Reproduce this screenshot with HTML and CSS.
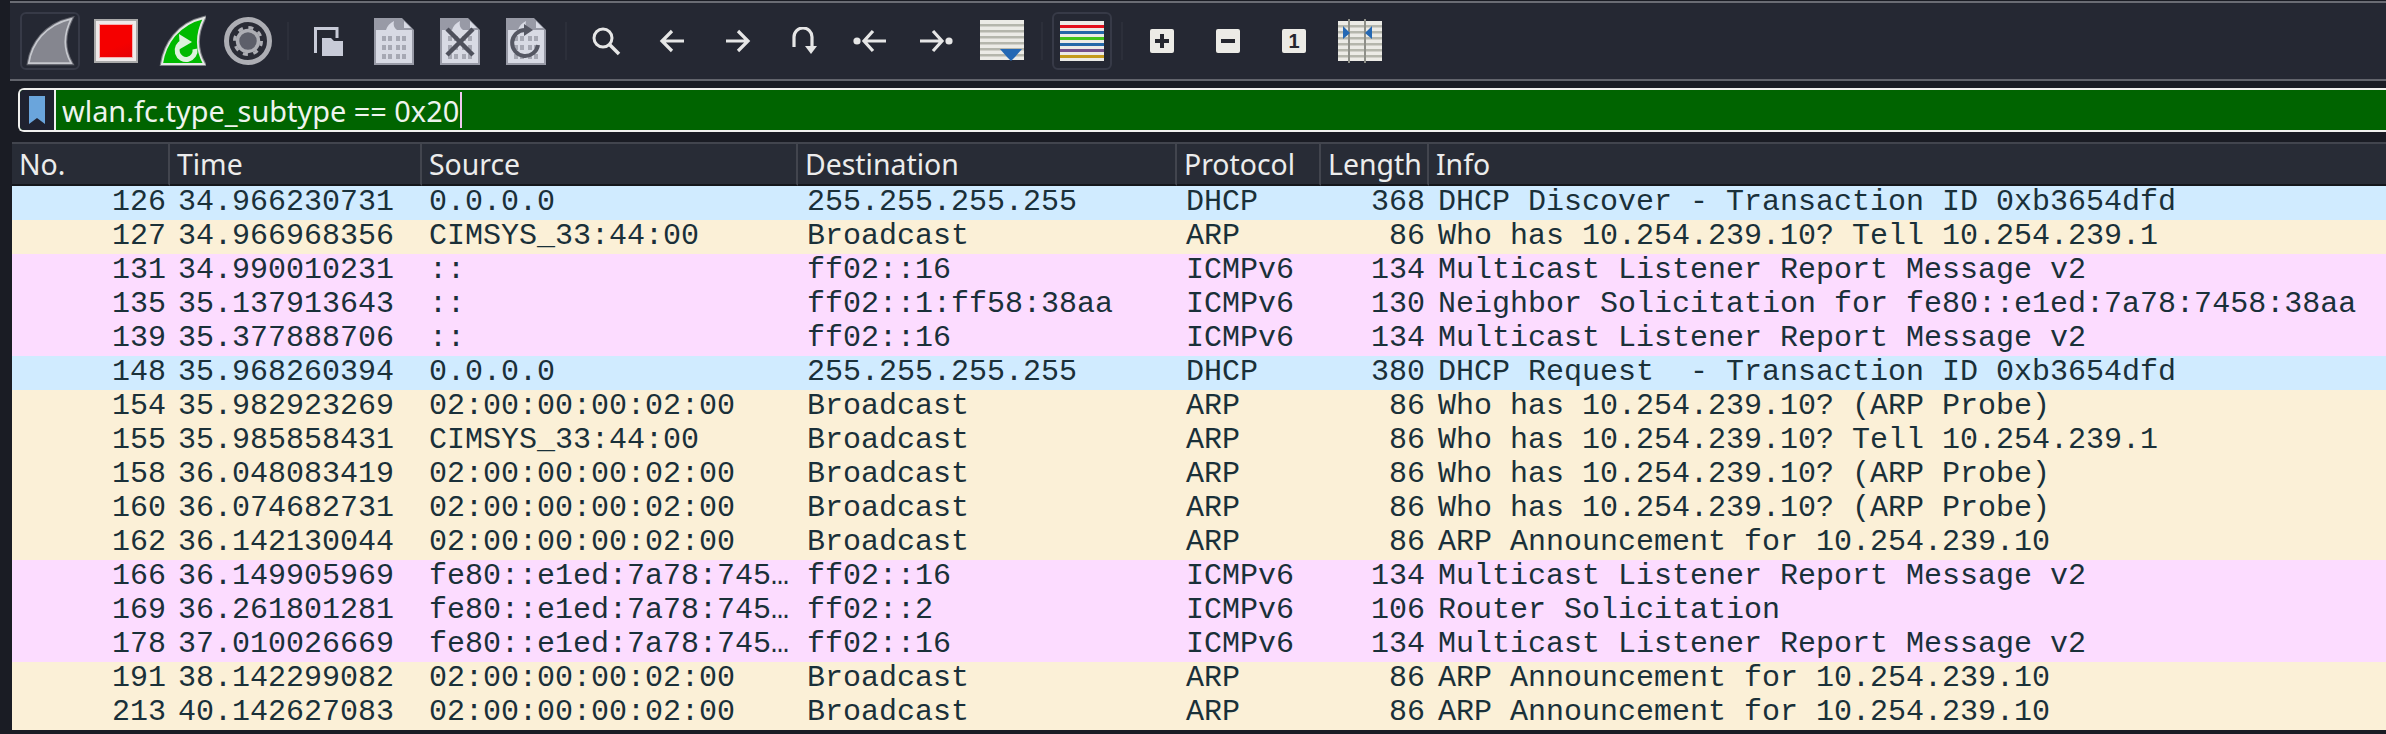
FILE: index.html
```html
<!DOCTYPE html>
<html lang="en">
<head>
<meta charset="utf-8">
<title>Wireshark</title>
<link rel="stylesheet" href="styles.css">
</head>
<body>
<svg class="defs" width="0" height="0" aria-hidden="true">
  <defs>
    <g id="digits" fill="#a6a8b3">
      <rect x="8" y="18" width="4" height="5"/><rect x="14" y="18" width="4" height="5"/><rect x="22" y="18" width="4" height="5"/><rect x="28" y="18" width="4" height="5"/>
      <rect x="8" y="27" width="4" height="5"/><rect x="14" y="27" width="4" height="5"/><rect x="22" y="27" width="4" height="5"/><rect x="28" y="27" width="4" height="5"/>
      <rect x="8" y="36" width="4" height="5"/><rect x="14" y="36" width="4" height="5"/><rect x="22" y="36" width="4" height="5"/><rect x="28" y="36" width="4" height="5"/>
    </g>
    <g id="doc">
      <path d="M0 0H28L40 12V47H0Z" fill="#989aa6"/>
      <path d="M2 12H38V45H2Z" fill="#d8dae4"/>
      <path d="M12 12C13 8 16 5 20 3C19 7 20 10 23 12Z" fill="#d8dae4"/>
      <path d="M30 3L37 10H30Z" fill="#d8dae4"/>
    </g>
    <g id="sheet">
      <rect width="44" height="40" fill="#ecebe6"/>
      <g fill="#b5b6ac">
        <rect y="4" width="44" height="2.5"/><rect y="10" width="44" height="2.5"/><rect y="16" width="44" height="2.5"/><rect y="22" width="44" height="2.5"/><rect y="28" width="44" height="2.5"/><rect y="34" width="44" height="2.5"/>
      </g>
    </g>
  </defs>
</svg>
<main class="app">
  <div class="toolbar">
    <button class="tool pressed"><svg width="58" height="58" viewBox="0 0 58 58"><path d="M7 52C10 32 24 12 51 6C43 22 43 38 51 52Z" fill="#85868f" stroke="#666770" stroke-width="4"/><path d="M7 52C10 32 24 12 51 6C43 22 43 38 51 52Z" fill="#85868f" stroke="#c6c8ce" stroke-width="1.8"/></svg></button>
    <button class="tool"><span class="stop"></span></button>
    <button class="tool"><svg width="48" height="52" viewBox="0 0 48 52"><path d="M4 49C7 29 20 9 46 3C38 19 38 35 46 49Z" fill="#00b900" stroke="#7c7e84" stroke-width="4"/><path d="M4 49C7 29 20 9 46 3C38 19 38 35 46 49Z" fill="#00b900" stroke="#e6e8e6" stroke-width="1.8"/><path d="M37 34A9 9 0 1 1 25 27" fill="none" stroke="#dcf2dc" stroke-width="5"/><path d="M21 19L34 27L22 34Z" fill="#dcf2dc"/></svg></button>
    <button class="tool"><svg width="50" height="50" viewBox="0 0 50 50"><circle cx="25" cy="25" r="21.5" fill="#2a2c36" stroke="#adaeb4" stroke-width="5"/><circle cx="25" cy="25" r="10.5" fill="#5d5f6a" stroke="#adaeb4" stroke-width="3.5"/><circle cx="25" cy="25" r="13.5" fill="none" stroke="#adaeb4" stroke-width="3" stroke-dasharray="5 5.6"/></svg></button>
    <span class="sep"></span>
    <button class="tool"><svg width="30" height="30" viewBox="0 0 30 30"><path d="M2.5 27V2.5H24V12" fill="none" stroke="#c8cbd8" stroke-width="3"/><path d="M9 30V12H18L21 15H30V30Z" fill="#c8cbd8"/></svg></button>
    <button class="tool"><svg width="40" height="47" viewBox="0 0 40 47"><use href="#doc"/><use href="#digits"/></svg></button>
    <button class="tool"><svg width="40" height="47" viewBox="0 0 40 47"><use href="#doc"/><use href="#digits"/><path d="M7 11L33 37M33 11L7 37" stroke="#4e505c" stroke-width="4.5"/></svg></button>
    <button class="tool"><svg width="40" height="47" viewBox="0 0 40 47"><use href="#doc"/><use href="#digits"/><path d="M32 27A13 13 0 1 1 19 12" fill="none" stroke="#555763" stroke-width="4"/><path d="M18 6L27 12L18 18Z" fill="#555763"/></svg></button>
    <span class="sep"></span>
    <button class="tool"><svg width="30" height="30" viewBox="0 0 30 30"><circle cx="12" cy="12" r="9" fill="none" stroke="#e6e6e6" stroke-width="3"/><path d="M18 18L28 28" stroke="#e6e6e6" stroke-width="3.5"/></svg></button>
    <button class="tool"><svg width="26" height="24" viewBox="0 0 26 24"><path d="M13 2L3 12L13 22M3 12H25" fill="none" stroke="#e6e6e6" stroke-width="3.2"/></svg></button>
    <button class="tool"><svg width="26" height="24" viewBox="0 0 26 24"><path d="M13 2L23 12L13 22M23 12H1" fill="none" stroke="#e6e6e6" stroke-width="3.2"/></svg></button>
    <button class="tool"><svg width="26" height="28" viewBox="0 0 26 28"><path d="M3 20V10A9 9 0 0 1 21 10V23" fill="none" stroke="#e6e6e6" stroke-width="3.2"/><path d="M14 19H26L20 27Z" fill="#e6e6e6"/></svg></button>
    <button class="tool"><svg width="34" height="24" viewBox="0 0 34 24"><circle cx="4" cy="12" r="3.6" fill="#e6e6e6"/><path d="M20 2L11 12L20 22M11 12H33" fill="none" stroke="#e6e6e6" stroke-width="3.2"/></svg></button>
    <button class="tool"><svg width="34" height="24" viewBox="0 0 34 24"><circle cx="30" cy="12" r="3.6" fill="#e6e6e6"/><path d="M14 2L23 12L14 22M23 12H1" fill="none" stroke="#e6e6e6" stroke-width="3.2"/></svg></button>
    <button class="tool"><svg width="44" height="42" viewBox="0 0 44 42"><use href="#sheet"/><path d="M20 29H42L35 37L31 41L27 37Z" fill="#2468b4"/></svg></button>
    <span class="sep"></span>
    <button class="tool pressed"><svg width="44" height="40" viewBox="0 0 44 40"><rect width="44" height="40" fill="#ecebe6"/><rect y="4" width="44" height="3" fill="#e3101c"/><rect y="10" width="44" height="3" fill="#2468a8"/><rect y="16" width="44" height="3" fill="#3fc41a"/><rect y="22" width="44" height="3" fill="#2468a8"/><rect y="28" width="44" height="3" fill="#75508a"/><rect y="34" width="44" height="3" fill="#c49a1c"/></svg></button>
    <span class="sep"></span>
    <button class="tool"><svg width="24" height="24" viewBox="0 0 24 24"><rect width="24" height="24" rx="2" fill="#ecebe6"/><path d="M12 5V19M5 12H19" stroke="#25272f" stroke-width="4"/></svg></button>
    <button class="tool"><svg width="24" height="24" viewBox="0 0 24 24"><rect width="24" height="24" rx="2" fill="#ecebe6"/><path d="M5 12H19" stroke="#25272f" stroke-width="4"/></svg></button>
    <button class="tool"><span class="one">1</span></button>
    <button class="tool"><svg width="44" height="44" viewBox="0 0 44 44"><use href="#sheet" y="2"/><path d="M11 0V44M27 0V44" stroke="#8e8f88" stroke-width="2"/><path d="M5 7L12 14L5 20ZM34 7L27 14L34 20Z" fill="#2468b4"/></svg></button>
  </div>
  <div class="filter">
    <span class="bookmark"><svg width="16" height="28" viewBox="0 0 16 28"><path d="M0 0H16V28L8 22L0 28Z" fill="#6aa5dc"/></svg></span>
    <span class="filter-input"><span class="filter-text">wlan.fc.type_subtype == 0x20</span><span class="caret"></span></span>
  </div>
  <table class="packets">
    <colgroup><col class="c-no"><col class="c-time"><col class="c-src"><col class="c-dst"><col class="c-proto"><col class="c-len"><col></colgroup>
    <thead><tr><th>No.</th><th>Time</th><th>Source</th><th>Destination</th><th>Protocol</th><th>Length</th><th>Info</th></tr></thead>
    <tbody>
      <tr class="dhcp"><td class="num">126</td><td>34.966230731</td><td>0.0.0.0</td><td>255.255.255.255</td><td>DHCP</td><td class="num">368</td><td>DHCP Discover - Transaction ID 0xb3654dfd</td></tr>
      <tr class="arp"><td class="num">127</td><td>34.966968356</td><td>CIMSYS_33:44:00</td><td>Broadcast</td><td>ARP</td><td class="num">86</td><td>Who has 10.254.239.10? Tell 10.254.239.1</td></tr>
      <tr class="icmp"><td class="num">131</td><td>34.990010231</td><td>::</td><td>ff02::16</td><td>ICMPv6</td><td class="num">134</td><td>Multicast Listener Report Message v2</td></tr>
      <tr class="icmp"><td class="num">135</td><td>35.137913643</td><td>::</td><td>ff02::1:ff58:38aa</td><td>ICMPv6</td><td class="num">130</td><td>Neighbor Solicitation for fe80::e1ed:7a78:7458:38aa</td></tr>
      <tr class="icmp"><td class="num">139</td><td>35.377888706</td><td>::</td><td>ff02::16</td><td>ICMPv6</td><td class="num">134</td><td>Multicast Listener Report Message v2</td></tr>
      <tr class="dhcp"><td class="num">148</td><td>35.968260394</td><td>0.0.0.0</td><td>255.255.255.255</td><td>DHCP</td><td class="num">380</td><td>DHCP Request  - Transaction ID 0xb3654dfd</td></tr>
      <tr class="arp"><td class="num">154</td><td>35.982923269</td><td>02:00:00:00:02:00</td><td>Broadcast</td><td>ARP</td><td class="num">86</td><td>Who has 10.254.239.10? (ARP Probe)</td></tr>
      <tr class="arp"><td class="num">155</td><td>35.985858431</td><td>CIMSYS_33:44:00</td><td>Broadcast</td><td>ARP</td><td class="num">86</td><td>Who has 10.254.239.10? Tell 10.254.239.1</td></tr>
      <tr class="arp"><td class="num">158</td><td>36.048083419</td><td>02:00:00:00:02:00</td><td>Broadcast</td><td>ARP</td><td class="num">86</td><td>Who has 10.254.239.10? (ARP Probe)</td></tr>
      <tr class="arp"><td class="num">160</td><td>36.074682731</td><td>02:00:00:00:02:00</td><td>Broadcast</td><td>ARP</td><td class="num">86</td><td>Who has 10.254.239.10? (ARP Probe)</td></tr>
      <tr class="arp"><td class="num">162</td><td>36.142130044</td><td>02:00:00:00:02:00</td><td>Broadcast</td><td>ARP</td><td class="num">86</td><td>ARP Announcement for 10.254.239.10</td></tr>
      <tr class="icmp"><td class="num">166</td><td>36.149905969</td><td>fe80::e1ed:7a78:745…</td><td>ff02::16</td><td>ICMPv6</td><td class="num">134</td><td>Multicast Listener Report Message v2</td></tr>
      <tr class="icmp"><td class="num">169</td><td>36.261801281</td><td>fe80::e1ed:7a78:745…</td><td>ff02::2</td><td>ICMPv6</td><td class="num">106</td><td>Router Solicitation</td></tr>
      <tr class="icmp"><td class="num">178</td><td>37.010026669</td><td>fe80::e1ed:7a78:745…</td><td>ff02::16</td><td>ICMPv6</td><td class="num">134</td><td>Multicast Listener Report Message v2</td></tr>
      <tr class="arp"><td class="num">191</td><td>38.142299082</td><td>02:00:00:00:02:00</td><td>Broadcast</td><td>ARP</td><td class="num">86</td><td>ARP Announcement for 10.254.239.10</td></tr>
      <tr class="arp"><td class="num">213</td><td>40.142627083</td><td>02:00:00:00:02:00</td><td>Broadcast</td><td>ARP</td><td class="num">86</td><td>ARP Announcement for 10.254.239.10</td></tr>
    </tbody>
  </table>
</main>
</body>
</html>
```
FILE: styles.css
```css
* { box-sizing: border-box; }
html, body { margin: 0; padding: 0; background: #1a1c24; }
.defs { position: absolute; }
.app { display: flex; flex-direction: column; width: 2386px; height: 734px; overflow: hidden; background: #1a1c24; }
.toolbar { display: flex; flex: none; align-items: center; height: 80px; margin: 1px 0 0 10px; padding: 0 0 0 7px; background: #252833; border-top: 2px solid #6a6c74; border-bottom: 2px solid #62646c; }
.tool { display: flex; align-items: center; justify-content: center; flex: none; width: 66px; height: 58px; padding: 0; background: none; border: 2px solid transparent; border-radius: 6px; }
.tool.pressed { width: 60px; margin: 0 3px; border-color: #373a47; }
.sep { flex: none; width: 2px; height: 38px; margin: 0 6px; background: #2c2f3a; }
.stop { width: 44px; height: 44px; background: linear-gradient(160deg, #f50000 60%, #e00008); border: 2px solid #aaa; box-shadow: inset 0 0 0 3px #eeeaea, inset 0 0 0 4px #f7b0b0; }
.one { display: flex; align-items: center; justify-content: center; width: 24px; height: 24px; border-radius: 2px; background: #ecebe6; color: #25272f; font: 700 20px/1 "Liberation Sans", sans-serif; }
.filter { display: flex; flex: none; height: 44px; margin: 7px 0 10px 18px; border: 2px solid #f0f0ee; border-right: 0; border-radius: 6px 0 0 6px; background: #006400; }
.bookmark { display: flex; align-items: center; justify-content: center; flex: none; width: 36px; background: #1f2230; border-right: 2px solid #f0f0ee; border-radius: 4px 0 0 4px; }
.filter-input { display: flex; align-items: center; padding-left: 6px; color: #eef4ee; }
.filter-text { padding-top: 2px; font: 28.9px/38px "Noto Sans", sans-serif; }
.caret { width: 2px; height: 36px; margin-left: 1px; background: #f0c8f0; }
.packets { width: 2374px; margin-left: 12px; border-collapse: separate; border-spacing: 0; table-layout: fixed; }
.c-no { width: 158px; }
.c-time { width: 252px; }
.c-src { width: 376px; }
.c-dst { width: 379px; }
.c-proto { width: 144px; }
.c-len { width: 108px; }
th { height: 44px; padding: 0 0 0 7px; background: #282c36; border-top: 2px solid #42454e; border-right: 2px solid #42454e; border-bottom: 2px solid #14161b; color: #ececec; font: 400 28.4px/1 "Noto Sans", sans-serif; text-align: left; white-space: nowrap; overflow: hidden; }
th:last-child { border-right: 0; }
td { height: 34px; padding: 0 0 2px 9px; color: #1a3039; font: 30px/32px "Liberation Mono", monospace; white-space: pre; overflow: hidden; }
td:nth-child(2) { padding-left: 8px; }
td:nth-child(3) { padding-left: 7px; }
td.num { padding: 0 4px 2px 0; text-align: right; }
.dhcp td { background: #d0ebff; }
.arp td { background: #fbf0d7; }
.icmp td { background: #fcdcff; }
```
